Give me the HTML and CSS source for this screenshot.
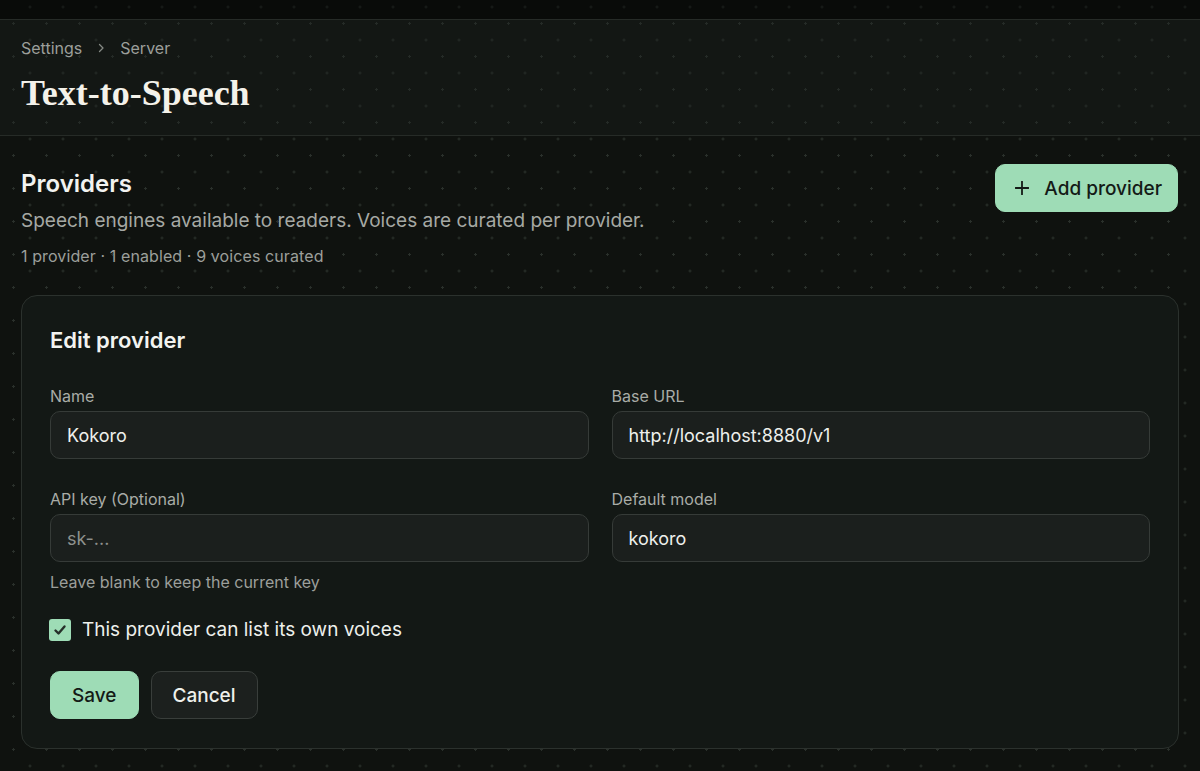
FILE: index.html
```html
<!DOCTYPE html>
<html lang="en">

<head>
  <meta charset="UTF-8" />
  <meta name="viewport" content="width=device-width, initial-scale=1.0" />
  <title>Text-to-Speech</title>
  <link rel="stylesheet" href="styles.css">
</head>

<body>
  <div class="topbar"></div>

  <header class="page-header">
    <nav class="crumbs">
      <span>Settings</span>
      <svg class="chev" width="12" height="12" viewBox="0 0 12 12">
        <path d="M4.5 2.5 L8 6 L4.5 9.5" fill="none" stroke="currentColor" stroke-width="1.3" stroke-linecap="round" stroke-linejoin="round" />
      </svg>
      <span>Server</span>
    </nav>
    <h1 class="page-title">Text-to-Speech</h1>
  </header>

  <main class="content">
    <section class="section-head">
      <div>
        <h2 class="section-title">Providers</h2>
        <p class="section-sub">Speech engines available to readers. Voices are curated per provider.</p>
        <p class="section-meta">1 provider · 1 enabled · 9 voices curated</p>
      </div>
      <button class="btn btn-primary btn-add">
        <svg width="14" height="14" viewBox="0 0 14 14">
          <path d="M7 0.5 V13.5 M0.5 7 H13.5" stroke="currentColor" stroke-width="1.8" stroke-linecap="round" />
        </svg>
        Add provider
      </button>
    </section>

    <form class="card">
      <h3 class="card-title">Edit provider</h3>

      <div class="grid">
        <div class="field">
          <label for="name">Name</label>
          <input class="input" id="name" type="text" value="Kokoro" />
        </div>
        <div class="field">
          <label for="url">Base URL</label>
          <input class="input" id="url" type="text" value="http://localhost:8880/v1" />
        </div>
        <div class="field">
          <label for="key">API key (Optional)</label>
          <input class="input" id="key" type="password" placeholder="sk-..." />
          <p class="hint">Leave blank to keep the current key</p>
        </div>
        <div class="field">
          <label for="model">Default model</label>
          <input class="input" id="model" type="text" value="kokoro" />
        </div>
      </div>

      <label class="check">
        <span class="box">
          <svg width="14" height="14" viewBox="0 0 14 14">
            <path d="M2.5 7.5 L5.5 10.5 L11.5 3.5" fill="none" stroke="currentColor" stroke-width="2.4" stroke-linecap="round" stroke-linejoin="round" />
          </svg>
        </span>
        This provider can list its own voices
      </label>

      <div class="actions">
        <button type="button" class="btn btn-primary">Save</button>
        <button type="button" class="btn btn-ghost">Cancel</button>
      </div>
    </form>
  </main>
</body>

</html>
```

FILE: styles.css
```css
body {
  margin: 0;
  padding: 0;
  font-family: Inter, "Noto Sans", sans-serif;
  color: #eef0ec;
  background-color: #0f120f;
  background-image:
    radial-gradient(circle, #2a302b 1px, transparent 1.3px),
    radial-gradient(circle, #2a302b 1px, transparent 1.3px);
  background-size: 33px 33px;
  background-position: -3px 7px, 13.5px 23.5px;
  min-height: 771px;
}

.topbar {
  height: 19px;
  background: rgba(0, 0, 0, 0.35);
  border-bottom: 1px solid #262b27;
}

.page-header {
  padding: 16px 21px 20px;
  background: rgba(30, 34, 31, 0.35);
  border-bottom: 1px solid #262b27;
}

.crumbs {
  display: flex;
  align-items: center;
  gap: 11px;
  font-size: 16px;
  line-height: 24px;
  color: #9c9f9b;
}

.chev {
  color: #858984;
  margin: 0 2px;
}

.page-title {
  margin: 11px 0 0;
  font-family: "Liberation Serif", "Times New Roman", serif;
  font-weight: 700;
  font-size: 36px;
  line-height: 44px;
  color: #f4f2ea;
}

.content {
  padding: 0 21px;
}

.section-head {
  display: flex;
  justify-content: space-between;
  align-items: flex-start;
  padding-top: 28px;
}

.section-title {
  margin: 5px 0 0;
  font-size: 24px;
  line-height: 30px;
  font-weight: 600;
  color: #f2f3f0;
}

.section-sub {
  margin: 9px 0 0;
  font-size: 19px;
  line-height: 26px;
  color: #a6a9a4;
}

.section-meta {
  margin: 11px 0 0;
  font-size: 16px;
  line-height: 22px;
  color: #9c9f9b;
  letter-spacing: 0.1px;
}

.btn {
  height: 48px;
  padding: 0 21px;
  border-radius: 10px;
  font-family: Inter, "Noto Sans", sans-serif;
  font-size: 19px;
  font-weight: 500;
  display: inline-flex;
  align-items: center;
  cursor: pointer;
}

.btn-primary {
  background: #9edcb6;
  color: #141a16;
  border: 1px solid #9edcb6;
}

.btn-ghost {
  background: #1c201e;
  color: #eef0ec;
  border: 1px solid #393e3b;
}

.btn-add {
  gap: 15px;
  padding: 0 15px 0 19px;
  margin-right: 1px;
}

.card {
  margin-top: 28px;
  padding: 30px 28px 29px;
  background: #131815;
  border: 1px solid #2b312d;
  border-radius: 16px;
}

.card-title {
  margin: 0;
  font-size: 22px;
  line-height: 28px;
  font-weight: 600;
  color: #f2f3f0;
}

.grid {
  display: grid;
  grid-template-columns: 1fr 1fr;
  column-gap: 23px;
  row-gap: 29px;
  margin-top: 31px;
}

.field label {
  display: block;
  font-size: 16px;
  line-height: 22px;
  color: #a9aca7;
  margin-bottom: 4px;
}

.input {
  box-sizing: border-box;
  width: 100%;
  height: 48px;
  padding: 0 16px;
  background: #1b1f1d;
  border: 1px solid #363b38;
  border-radius: 10px;
  color: #eef0ec;
  font-family: Inter, "Noto Sans", sans-serif;
  font-size: 18px;
  outline: none;
}

.input::placeholder {
  color: #8e918d;
}

.hint {
  margin: 9px 0 0;
  font-size: 16px;
  line-height: 22px;
  color: #9c9f9b;
}

.check {
  display: flex;
  align-items: center;
  gap: 11px;
  margin-top: 24px;
  font-size: 19px;
  line-height: 26px;
  color: #eef0ec;
}

.box {
  width: 22px;
  height: 22px;
  margin-left: -1px;
  border-radius: 3px;
  background: #9edcb6;
  color: #26302a;
  display: flex;
  align-items: center;
  justify-content: center;
}

.actions {
  display: flex;
  gap: 12px;
  margin-top: 28px;
}
```
